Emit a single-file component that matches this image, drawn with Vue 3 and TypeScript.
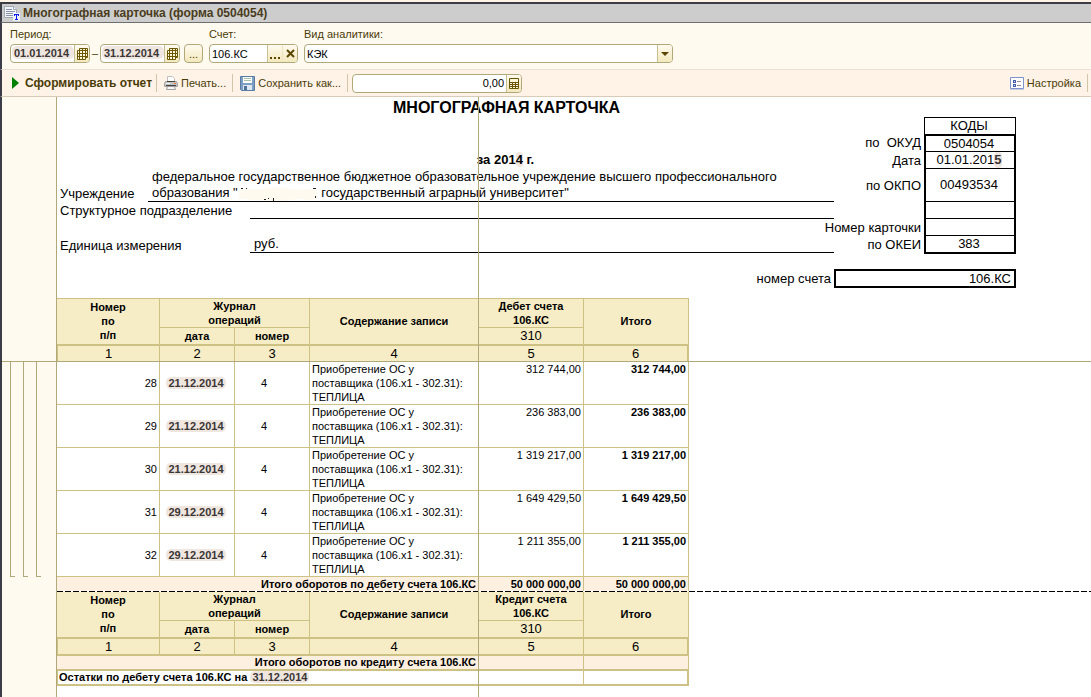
<script setup lang="ts">
import { ref } from 'vue'

interface Entry {
  n: number
  date: string
  journal: string
  sum: string
}

const dateFrom = ref('01.01.2014')
const dateTo = ref('31.12.2014')
const account = ref('106.КС')
const analytics = ref('КЭК')
const amount = ref('0,00')

const entries: Entry[] = [
  { n: 28, date: '21.12.2014', journal: '4', sum: '312 744,00' },
  { n: 29, date: '21.12.2014', journal: '4', sum: '236 383,00' },
  { n: 30, date: '21.12.2014', journal: '4', sum: '1 319 217,00' },
  { n: 31, date: '29.12.2014', journal: '4', sum: '1 649 429,50' },
  { n: 32, date: '29.12.2014', journal: '4', sum: '1 211 355,00' },
]
const columnNumbers = [1, 2, 3, 4, 5, 6]
</script>

<template>
  <div class="window">
    <header class="titlebar">
      <svg class="doc-icon" width="16" height="16" viewBox="0 0 16 16" aria-hidden="true">
        <path d="M0.500 1.500h9l3 3v8h-12z" fill="#f2f5fa" stroke="#a0a8b4" />
        <path d="M9.500 1.500v3h3" fill="#fff" stroke="#a0a8b4" />
        <path d="M2 4.500h6M2 6.500h9M2 8.500h9M2 10.500h9" stroke="#8a94a8" />
        <path d="M9 8h7v8h-7z" fill="#f0f2fa" />
        <path d="M10 9h5v2h-1v-1h-1v4h1v1h-3v-1h1v-4h-1v1h-1z" fill="#0a18e8" />
      </svg>
      <h1>Многографная карточка (форма 0504054)</h1>
    </header>

    <form class="params" @submit.prevent>
      <div class="field">
        <label for="from">Период:</label>
        <div class="period">
          <div class="box date">
            <input id="from" v-model="dateFrom" class="smudged" />
            <button type="button" aria-label="Выбрать начало">
              <svg width="11" height="12" viewBox="0 0 11 12"><path d="M2.500 0.500h8v9h-2v2h-8v-9h2z" fill="#fff6dc" stroke="#6b5600" /><path d="M2.500 2v9M5.500 1v10M8.500 1v9M1 5.500h9M1 8.500h9M3 2.500h7" fill="none" stroke="#6b5600" /></svg>
            </button>
          </div>
          <span class="dash">–</span>
          <div class="box date">
            <input v-model="dateTo" class="smudged" aria-label="Конец периода" />
            <button type="button" aria-label="Выбрать конец">
              <svg width="11" height="12" viewBox="0 0 11 12"><path d="M2.500 0.500h8v9h-2v2h-8v-9h2z" fill="#fff6dc" stroke="#6b5600" /><path d="M2.500 2v9M5.500 1v10M8.500 1v9M1 5.500h9M1 8.500h9M3 2.500h7" fill="none" stroke="#6b5600" /></svg>
            </button>
          </div>
          <button type="button" class="more">...</button>
        </div>
      </div>
      <div class="field">
        <label for="account">Счет:</label>
        <div class="box account">
          <input id="account" v-model="account" />
          <button type="button" class="dots" aria-label="Выбрать счет">
            <svg width="11" height="12" viewBox="0 0 11 12"><path d="M0 9h2v2h-2zM4 9h2v2h-2zM8 9h2v2h-2z" fill="#5a4600" /></svg>
          </button>
          <button type="button" class="clear" aria-label="Очистить">
            <svg width="9" height="9" viewBox="0 0 9 9"><path d="M1 1l7 7M8 1l-7 7" stroke="#5a4600" stroke-width="2" /></svg>
          </button>
        </div>
      </div>
      <div class="field">
        <label for="analytics">Вид аналитики:</label>
        <div class="box analytics">
          <select id="analytics" v-model="analytics">
            <option>КЭК</option>
          </select>
          <span class="arrow" aria-hidden="true">
            <svg width="8" height="4" viewBox="0 0 8 4"><path d="M0 0h8l-4 4z" fill="#5a4600" /></svg>
          </span>
        </div>
      </div>
    </form>

    <div class="toolbar">
      <button type="button" class="tool run">
        <svg width="7" height="12" viewBox="0 0 7 12"><path d="M0 0l7 6l-7 6z" fill="#008000" /></svg>
        <span>Сформировать отчет</span>
      </button>
      <i class="sep"></i>
      <button type="button" class="tool print">
        <svg width="14" height="14" viewBox="0 0 14 14">
          <path d="M3.500 5v-4.500h5l2 2v3" fill="#fff" stroke="#c0c0c0" />
          <path d="M1.500 5.500h11l1 2v3h-13v-3z" fill="#c4c4c4" stroke="#a4a4a4" />
          <path d="M3 5.500h8M2 9.500h10" stroke="#404040" />
          <path d="M2 7.500h4" stroke="#f0f0f0" />
          <path d="M10 7.500h2" stroke="#e87830" />
          <path d="M3.500 10.500h7l1 3h-9z" fill="#f6f6f6" stroke="#a0a0a0" />
        </svg>
        <span>Печать...</span>
      </button>
      <i class="sep"></i>
      <button type="button" class="tool save">
        <svg width="15" height="15" viewBox="0 0 15 15">
          <path d="M0.500 0.500h14v14h-13l-1-1z" fill="#7c9fc4" stroke="#5a7ba4" />
          <path d="M3 1h9v6h-9z" fill="#fff" />
          <path d="M4 2.500h7M4 4.500h7" stroke="#a8c0a8" />
          <path d="M3 9h9v5h-9z" fill="#dfe8f0" />
          <path d="M4 10h3v4h-3z" fill="#50759c" />
        </svg>
        <span>Сохранить как...</span>
      </button>
      <i class="sep"></i>
      <div class="box amount">
        <input v-model="amount" aria-label="Сумма" />
        <button type="button" aria-label="Калькулятор">
          <svg width="10" height="11" viewBox="0 0 10 11"><path d="M0.500 0.500h9v10h-9z" fill="#fff6dc" stroke="#6b5600" /><path d="M1 4.500h8M1 6.500h8M1 8.500h8M3.500 4v6M6.500 4v6" stroke="#6b5600" /></svg>
        </button>
      </div>
      <button type="button" class="tool settings">
        <svg width="14" height="13" viewBox="0 0 14 13">
          <path d="M0.500 0.500h13v11h-13z" fill="#fdfdff" stroke="#7d93cc" />
          <path d="M0 12.500h14" stroke="#c8cce0" />
          <path d="M3 3h3v3h-3zM3 7h3v3h-3z" fill="#4860a8" />
          <path d="M4 4h1v1h-1zM4 8h1v1h-1z" fill="#c0d0f0" />
          <path d="M7 4.500h4M7 8.500h4" stroke="#909090" />
        </svg>
        <span>Настройка</span>
      </button>
      <i class="sep"></i>
    </div>

    <main class="sheet">
      <section class="pane">
        <div class="gutter"></div>
        <div class="content">
          <div class="form-head">
            <h2 class="title">МНОГОГРАФНАЯ КАРТОЧКА</h2>
            <div class="code caption">КОДЫ</div>

            <div class="code-label r3">по&nbsp; ОКУД</div>
            <div class="code first">0504054</div>

            <div class="for-year">за 201<span class="patch">4</span> г.</div>
            <div class="code-label r4">Дата</div>
            <div class="code r4">01.01.201<b class="patch digit">5</b></div>

            <div class="name r5">Учреждение</div>
            <div class="value wide">федеральное государственное бюджетное образовательное учреждение высшего профессионального<br />образования "<span class="erased"><svg width="80" height="14" viewBox="0 0 80 14"><path d="M1 3c8-3 16 1 24-1s20-2 28 0s18-1 26 1v9c-9 2-18-1-26 1s-34 0-52-1z" fill="#fffaf0" /><path d="M3 1.500h2M8 1.500h1M75 1.500h3M26 12.500h2M30 11.500h1M35.500 11v3M77.500 9v2" stroke="#222" /></svg></span> государственный аграрный университет"</div>
            <div class="code-label r5">по ОКПО</div>
            <div class="code r5">00493534</div>

            <div class="name r6">Структурное подразделение</div>
            <div class="value r6"></div>
            <div class="code r6"></div>

            <div class="code-label r7">Номер карточки</div>
            <div class="code r7"></div>

            <div class="name r8">Единица измерения</div>
            <div class="value r8">руб.</div>
            <div class="code-label r8">по ОКЕИ</div>
            <div class="code last">383</div>

            <div class="code-label r10">номер счета</div>
            <div class="account-box">106.КС</div>
          </div>

          <table class="ledger frozen">
            <colgroup><col class="c1" /><col class="c2" /><col class="c2" /><col class="c4" /><col class="c5" /><col class="c5" /></colgroup>
            <thead>
              <tr class="h1">
                <th rowspan="2">Номер<br />по<br />п/п</th>
                <th colspan="2">Журнал<br />операций</th>
                <th rowspan="2">Содержание записи</th>
                <th>Дебет счета<br />106.КС</th>
                <th rowspan="2">Итого</th>
              </tr>
              <tr class="h2"><th>дата</th><th>номер</th><th class="plain">310</th></tr>
              <tr class="nums"><td v-for="c in columnNumbers" :key="c">{{ c }}</td></tr>
            </thead>
          </table>
        </div>
      </section>

      <section class="pane">
        <div class="gutter">
          <div class="groups"><i></i><i></i><i></i></div>
        </div>
        <div class="content">
          <table class="ledger">
            <colgroup><col class="c1" /><col class="c2" /><col class="c2" /><col class="c4" /><col class="c5" /><col class="c5" /></colgroup>
            <tbody>
              <tr v-for="e in entries" :key="e.n" class="entry">
                <td class="right">{{ e.n }}</td>
                <td class="center"><span class="smudge">{{ e.date }}</span></td>
                <td class="journal">{{ e.journal }}</td>
                <td class="text">Приобретение ОС у<br />поставщика (106.x1 - 302.31):<br />ТЕПЛИЦА</td>
                <td class="sum">{{ e.sum }}</td>
                <td class="sum bold">{{ e.sum }}</td>
              </tr>
              <tr class="total">
                <td colspan="4">Итого оборотов по дебету счета 106.КС</td>
                <td>50 000 000,00</td>
                <td>50 000 000,00</td>
              </tr>
            </tbody>
          </table>
        </div>
      </section>

      <section class="pane rest">
        <div class="gutter"></div>
        <div class="content dashed">
          <table class="ledger">
            <colgroup><col class="c1" /><col class="c2" /><col class="c2" /><col class="c4" /><col class="c5" /><col class="c5" /></colgroup>
            <thead>
              <tr class="h1">
                <th rowspan="2">Номер<br />по<br />п/п</th>
                <th colspan="2">Журнал<br />операций</th>
                <th rowspan="2">Содержание записи</th>
                <th>Кредит счета<br />106.КС</th>
                <th rowspan="2">Итого</th>
              </tr>
              <tr class="h2"><th>дата</th><th>номер</th><th class="plain">310</th></tr>
              <tr class="nums thick"><td v-for="c in columnNumbers" :key="c">{{ c }}</td></tr>
            </thead>
            <tbody>
              <tr class="total thick">
                <td colspan="4">Итого оборотов по кредиту счета 106.КС</td>
                <td></td>
                <td></td>
              </tr>
              <tr class="rest-row">
                <td colspan="4">Остатки по дебету счета 106.КС на <span class="smudge">31.12.2014</span></td>
                <td></td>
                <td></td>
              </tr>
            </tbody>
          </table>
        </div>
      </section>
      <div class="freeze-line"></div>
    </main>
  </div>
</template>

<style>
body {
  margin: 0;
  background: #fff3e6;
}
</style>

<style scoped>
* {
  box-sizing: border-box;
}
.window {
  display: flex;
  flex-direction: column;
  min-height: 100vh;
  border-top: 2px solid #fff3e6;
  font-family: 'Liberation Sans', Arial, sans-serif;
  font-size: 11px;
  color: #4a3c08;
}
button,
input,
select {
  margin: 0;
  padding: 0;
  border: 0;
  background: none;
  font: inherit;
  color: inherit;
}
svg {
  display: block;
  flex: none;
}
.titlebar {
  display: flex;
  align-items: center;
  gap: 3px;
  height: 21px;
  padding-left: 2px;
  border-top: 2px solid #3c3c46;
  border-left: 2px solid #3c3c46;
  border-bottom: 1px solid #6e6e6e;
  background: #cdcdcd;
}
h1 {
  margin: 0;
  font-size: 12px;
  line-height: 16px;
  color: #4a3c1c;
}
.params {
  display: flex;
  gap: 5px;
  padding: 4px 8px 6px;
  border-left: 2px solid #3c3c46;
  border-bottom: 1px solid #e8dfd8;
  background: #fffaf0;
}
.field label {
  display: block;
  height: 17px;
  line-height: 15px;
}
.period {
  display: flex;
}
.box {
  display: flex;
  position: relative;
  height: 19px;
  border: 1px solid #b0a878;
  border-radius: 4px;
  background: #fff;
  overflow: hidden;
}
.box input,
.box select {
  flex: 1;
  min-width: 0;
  padding-left: 2px;
  color: #000;
  appearance: none;
}
.box button,
.arrow {
  display: flex;
  align-items: center;
  justify-content: center;
  width: 15px;
  border-left: 1px solid #c8bf90;
  background: linear-gradient(#fffaf0, #f3e9bd);
}
.date {
  width: 80px;
}
.box .smudged {
  margin: 1px 0 3px 1px;
  padding-left: 2px;
  border-radius: 5px;
  background: #f0e6e0;
  font-weight: bold;
  color: #3a3636;
}
.dash {
  width: 10px;
  text-align: center;
  line-height: 18px;
}
.more {
  width: 19px;
  height: 19px;
  margin-left: 4px;
  border: 1px solid #b0a878;
  border-radius: 4px;
  background: linear-gradient(#fffaf0, #f3e9bd);
}
.field + .field {
  margin-left: 1px;
}
.account {
  width: 89px;
}
.account .clear {
  border-left-color: #eee4c0;
}
.analytics {
  width: 369px;
}
.toolbar {
  display: flex;
  align-items: center;
  height: 27px;
  border-left: 2px solid #3c3c46;
  border-bottom: 1px solid #d8ccb8;
  background: #fff2e6;
}
.tool {
  display: flex;
  align-items: center;
  gap: 3px;
}
.run {
  gap: 6px;
  padding: 0 4px 0 10px;
  font-size: 12px;
  font-weight: bold;
}
.print,
.save {
  padding: 0 6px 0 7px;
}
.sep {
  width: 1px;
  height: 18px;
  background: #cfc5a8;
}
.amount {
  width: 170px;
  margin-left: 4px;
}
.amount input {
  padding-right: 2px;
  text-align: right;
}
.settings {
  margin-left: auto;
  padding-right: 6px;
}
.settings + .sep {
  margin-right: 3px;
}
.sheet {
  position: relative;
  display: flex;
  flex: 1;
  flex-direction: column;
  border-left: 2px solid #3c3c46;
  background: #fff;
  color: #000;
}
.pane {
  display: flex;
}
.pane:first-child {
  border-bottom: 1px solid #b0a878;
}
.rest {
  flex: 1;
}
.gutter {
  width: 55px;
  flex: none;
  border-right: 1px solid #b0a878;
  background: #fffaf0;
}
.groups {
  display: flex;
  gap: 8px;
  height: 100%;
  padding-left: 8px;
}
.groups i {
  width: 5px;
  height: 215px;
  border-left: 1px solid #b0a878;
  border-bottom: 1px solid #b0a878;
}
.content {
  flex: 1;
  min-width: 0;
}
.dashed {
  background: repeating-linear-gradient(90deg, #000 0 6px, #fff 6px 8px) 0 0 / 100% 1px no-repeat;
  padding-top: 1px;
}
.freeze-line {
  position: absolute;
  top: 0;
  bottom: 0;
  left: 476px;
  width: 1px;
  background: #b0a878;
}

.form-head {
  display: grid;
  grid-template-columns: 91px 102px 584px 90px 92px;
  grid-template-rows: 20px 17px 18px 17px 33px 17px 17px 18px 15px 19px;
  padding-bottom: 10px;
  font-size: 13px;
  line-height: 16px;
  white-space: nowrap;
}
.title {
  grid-area: 1 / 1 / 2 / 6;
  margin: 0;
  padding-right: 60px;
  font-size: 16px;
  line-height: 22px;
  text-align: center;
}
.for-year {
  grid-area: 4 / 1 / 5 / 6;
  padding-right: 62px;
  font-weight: bold;
  text-align: center;
}
.patch {
  border-radius: 4px;
  background: #f0e6e0;
}
.digit {
  color: #3a3636;
}
.name {
  grid-column: 1 / 3;
  align-self: end;
  padding-left: 3px;
}
.value {
  grid-column: 3;
  padding-left: 4px;
  border-bottom: 1px solid #000;
}
.value.wide {
  grid-area: 5 / 2 / 6 / 4;
}
.value.r8 {
  margin-bottom: 1px;
}
.erased {
  display: inline-block;
  width: 80px;
  height: 14px;
  vertical-align: bottom;
}
.code-label {
  grid-column: 3 / 5;
  justify-self: end;
  align-self: center;
  padding-right: 3px;
}
.code {
  display: flex;
  grid-column: 5;
  align-items: center;
  justify-content: center;
  padding-right: 2px;
  border: solid #000;
  border-width: 0 2px 1px;
}
.code.caption {
  grid-row: 2;
  border-width: 1px 1px 0;
}
.code.first {
  grid-row: 3;
  border-top-width: 2px;
}
.code.last {
  grid-row: 8;
  border-bottom-width: 2px;
}
.r3 { grid-row: 3; }
.r4 { grid-row: 4; }
.r5 { grid-row: 5; }
.r6 { grid-row: 6; }
.r7 { grid-row: 7; }
.r8 { grid-row: 8; }
.code-label.r10 { grid-area: 10 / 3 / 11 / 4; }
.account-box {
  grid-area: 10 / 4 / 11 / 6;
  padding-right: 3px;
  border: 2px solid #000;
  line-height: 15px;
  text-align: right;
}

.ledger {
  width: 632px;
  table-layout: fixed;
  border-collapse: separate;
  border-spacing: 0;
  line-height: 14px;
}
.c1 { width: 103px; }
.c2 { width: 75px; }
.c4 { width: 169px; }
.c5 { width: 105px; }
.ledger th,
.ledger td {
  padding: 0 2px;
  border: solid #cdc283;
  border-width: 0 1px 1px 0;
}
.ledger th,
.nums td {
  background: #f6edc6;
  text-align: center;
}
.frozen .h1 th {
  border-top-width: 1px;
}
.h1 { height: 29px; }
.frozen .h1 { height: 30px; }
.h2 { height: 18px; }
.ledger .h2 th,
.ledger th[rowspan] {
  border-bottom-width: 2px;
}
.ledger th[rowspan] {
  padding-bottom: 2px;
}
.ledger .plain,
.nums td {
  font-size: 13px;
  font-weight: normal;
}
.nums { height: 15px; }
.nums td {
  line-height: 15px;
}
.ledger .nums td:first-child {
  border-left-width: 1px;
}
.ledger .nums td:last-child {
  border-right-width: 2px;
}
.frozen .nums td {
  border-bottom-width: 0;
}
.thick td {
  border-bottom-width: 2px !important;
}
.entry td {
  height: 43px;
}
.right {
  text-align: right;
}
.center {
  text-align: center;
}
.ledger .journal {
  padding-right: 18px;
  text-align: center;
}
.sum {
  text-align: right;
  vertical-align: top;
}
.bold {
  font-weight: bold;
}
.smudge {
  padding: 0 2px;
  border-radius: 5px;
  background: #f0e6e0;
  font-weight: bold;
  line-height: 12px;
  color: #3a3636;
}
.center .smudge {
  margin-right: 2px;
}
.total td {
  height: 14px;
  background: #fdf0e0;
  font-weight: bold;
  text-align: right;
}
.rest .total td {
  height: 15px;
  line-height: 13px;
}
.ledger .total:last-child td {
  border-bottom-width: 0;
}
.rest-row td {
  height: 15px;
  border-bottom-width: 2px !important;
  font-weight: bold;
  line-height: 13px;
}
.rest-row td:first-child {
  border-left-width: 1px;
}
.ledger .rest-row td:first-child {
  padding-left: 1px;
}
.rest-row td:last-child {
  border-right-width: 2px;
}
</style>
